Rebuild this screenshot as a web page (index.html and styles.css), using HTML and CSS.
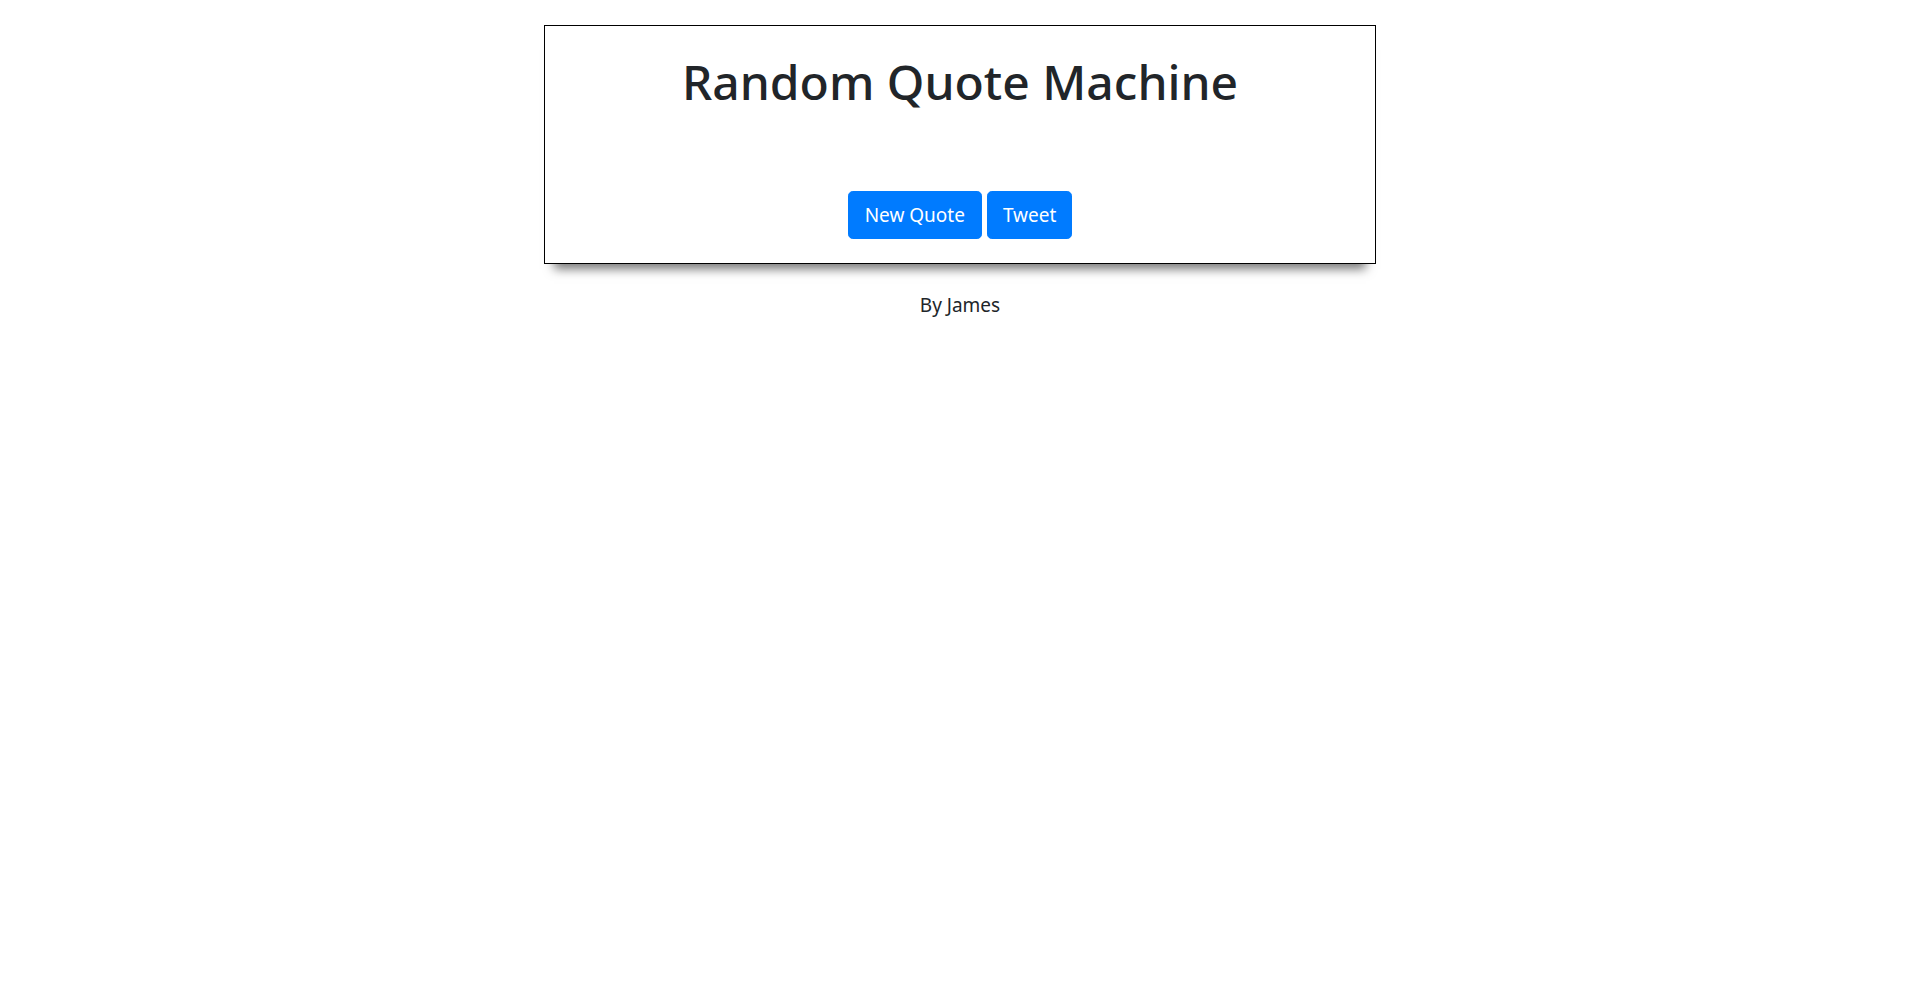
FILE: index.html
```html
<!DOCTYPE html>
<html lang="en">
<head>
<meta charset="utf-8">
<title>Random Quote Machine</title>
<link rel="stylesheet" href="styles.css">
</head>
<body>
<main class="page">
  <section class="quote-box" id="quote-box">
    <h1 class="title">Random Quote Machine</h1>
    <div class="quote-area"></div>
    <div class="buttons">
      <button class="btn" id="new-quote">New Quote</button>
      <a class="btn" id="tweet-quote" href="#">Tweet</a>
    </div>
  </section>
  <p class="author">By James</p>
</main>
</body>
</html>
```

FILE: styles.css
```css
* { box-sizing: border-box; }
html, body { margin: 0; padding: 0; background: #fff; }
body {
  font-family: "Noto Sans", "Open Sans", sans-serif;
  color: #212529;
}
.page {
  display: flex;
  flex-direction: column;
  align-items: center;
  padding-top: 25px;
}
.quote-box {
  width: 832px;
  border: 1px solid #000;
  background: #fff;
  box-shadow: 0 15px 10px -10px #777;
  display: flex;
  flex-direction: column;
  align-items: center;
  padding: 27px 0 24px;
}
.title {
  margin: 0;
  font-size: 48px;
  font-weight: 500;
  line-height: 57.6px;
  color: #212529;
}
.quote-area {
  height: 80.4px;
}
.buttons {
  display: flex;
  gap: 5px;
}
.btn {
  display: inline-block;
  font-family: inherit;
  font-size: 19px;
  line-height: 30px;
  padding: 8px 16px;
  border: 1px solid #007bff;
  border-radius: 4.8px;
  background: #007bff;
  color: #fff;
  text-decoration: none;
  cursor: pointer;
}
#tweet-quote {
  padding: 8px 15px;
}
.author {
  margin: 26px 0 0;
  font-size: 19px;
  line-height: 30px;
  color: #212529;
}
```
